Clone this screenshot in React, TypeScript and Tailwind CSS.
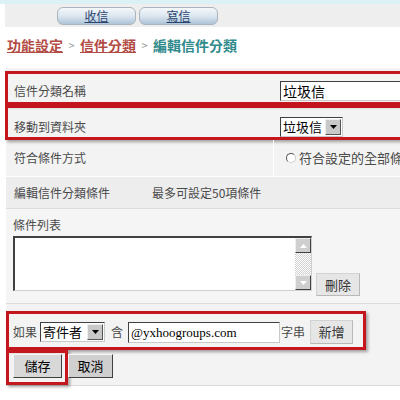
const cjk = '[font-family:"Noto_Sans_CJK_TC","Noto_Sans_CJK_SC",sans-serif]'

function Arrow({ up = false, color = '#000' }: { up?: boolean; color?: string }) {
  return (
    <svg width="7" height="4" viewBox="0 0 7 4">
      <path d={up ? 'M0 4 L3.5 0 L7 4 Z' : 'M0 0 L7 0 L3.5 4 Z'} fill={color} />
    </svg>
  )
}

function Select({ value, w }: { value: string; w: string }) {
  return (
    <div className={`flex items-stretch shrink-0 h-[20px] bg-white border border-t-[#404040] border-l-[#404040] border-r-[#c8c8c8] border-b-[#c8c8c8] ${w}`}>
      <span className="flex-1 min-w-0 whitespace-nowrap overflow-hidden pl-[2px] text-[13px] leading-[18px] text-black">{value}</span>
      <span className="w-[16px] shrink-0 m-[1px] flex items-center justify-center bg-[#c8c8c8] border border-t-[#eee] border-l-[#eee] border-r-[#555] border-b-[#555]">
        <Arrow />
      </span>
    </div>
  )
}

const redBox = 'border-[3px] border-[#c4161c] shadow-[2px_2px_3px_rgba(0,0,0,0.35)]'
const flatBtn = 'flex items-center justify-center shrink-0 bg-[#e6e6e6] border border-[#d2d2d2] border-r-[#b8b8b8] border-b-[#b8b8b8] text-[13px] text-[#333]'
const winBtn = 'flex items-center justify-center shrink-0 h-[24px] bg-[#cfcfcf] border border-t-[#f4f4f4] border-l-[#f4f4f4] border-r-[#404040] border-b-[#404040] text-[13px] text-black'

export default function App() {
  return (
    <div className={`w-[400px] h-[400px] overflow-hidden bg-white ${cjk}`}>
      <div className="h-[4px] bg-[#dcf1f6]" />
      <div className="ml-[5px] h-[23px] bg-[#eeeeee] flex items-start pt-[3px] pl-[52px] gap-[3px]">
        {['收信', '寫信'].map((t) => (
          <div key={t} className="w-[79px] h-[18px] rounded-[6px] border border-[#aab4bd] bg-gradient-to-b from-[#f4f7fa] via-[#dce7f0] to-[#aec4d8] flex items-center justify-center">
            <span className="text-[12px] leading-[14px] text-[#2c4570] underline">{t}</span>
          </div>
        ))}
      </div>

      <div className="h-[41px] pl-[7px] pt-[10px] flex items-start text-[14px] leading-[16px] font-bold">
        <span className="text-[#b24b44] underline">功能設定</span>
        <span className="w-[17px] text-center text-[11px] font-normal text-[#999]">&gt;</span>
        <span className="text-[#b24b44] underline">信件分類</span>
        <span className="w-[17px] text-center text-[11px] font-normal text-[#999]">&gt;</span>
        <span className="text-[#2f8a8c]">編輯信件分類</span>
      </div>

      <div className="ml-[6px] bg-[#f3f3f3] pt-[3px] border-b border-[#dcdcdc] text-[12px] text-[#4a4a4a]">
        <div className={`-ml-[1px] w-[420px] ${redBox}`}>
          <div className="h-[28px] pt-[6px] flex items-center">
            <span className="w-[272px] shrink-0 pl-[6px]">信件分類名稱</span>
            <div className="w-[130px] shrink-0 h-[20px] bg-white border border-t-[#404040] border-l-[#404040] border-r-[#c8c8c8] border-b-[#c8c8c8] pl-[2px] text-[14px] leading-[18px] text-black">垃圾信</div>
          </div>
        </div>
        <div className={`-ml-[1px] w-[420px] ${redBox}`}>
          <div className="h-[29px] pt-[8px] flex items-center">
            <span className="w-[272px] shrink-0 pl-[6px]">移動到資料夾</span>
            <Select value="垃圾信" w="w-[63px]" />
          </div>
        </div>

        <div className="h-[37px] flex border-b border-white">
          <div className="w-[267px] shrink-0 pl-[8px] flex items-center">符合條件方式</div>
          <div className="w-[1px] shrink-0 bg-white" />
          <div className="flex items-center pl-[12px] gap-[3px]">
            <span className="w-[10px] h-[10px] shrink-0 rounded-full bg-white border border-t-[#555] border-l-[#555] border-r-[#ccc] border-b-[#ccc]" />
            <span className="whitespace-nowrap text-[13px]">符合設定的全部條件</span>
          </div>
        </div>

        <div className="h-[32px] flex items-center bg-[#ededed] border-b border-[#dcdcdc]">
          <span className="w-[146px] shrink-0 pl-[8px]">編輯信件分類條件</span>
          <span>最多可設定50項條件</span>
        </div>

        <div className="h-[95px] pt-[9px] pl-[7px] border-b border-[#dcdcdc] bg-[#f5f5f5]">
          <div className="leading-[14px]">條件列表</div>
          <div className="mt-[4px] flex items-start">
            <div className="w-[299px] h-[55px] shrink-0 flex bg-white border-t-2 border-l-2 border-t-[#404040] border-l-[#404040] border-r border-b border-r-[#cfcfcf] border-b-[#cfcfcf]">
              <div className="flex-1" />
              <div className="w-[16px] flex flex-col">
                <span className="h-[15px] flex items-center justify-center bg-[#cfcfcf] border border-t-[#eee] border-l-[#eee] border-r-[#404040] border-b-[#404040]">
                  <Arrow up color="#fff" />
                </span>
                <span className="flex-1 bg-[repeating-conic-gradient(#d0d0d0_0_25%,#ffffff_0_50%)] bg-[length:2px_2px]" />
                <span className="h-[15px] flex items-center justify-center bg-[#cfcfcf] border border-t-[#eee] border-l-[#eee] border-r-[#404040] border-b-[#404040]">
                  <Arrow color="#fff" />
                </span>
              </div>
            </div>
            <button className={`ml-[4px] mt-[37px] w-[44px] h-[23px] ${flatBtn}`}>刪除</button>
          </div>
        </div>

        <div className="pt-[7px]">
          <div className={`w-[360px] ${redBox}`}>
            <div className="h-[33px] pt-[3px] pl-[4px] flex items-center">
              <span className="w-[24px] shrink-0">如果</span>
              <div className="ml-[3px]"><Select value="寄件者" w="w-[65px]" /></div>
              <span className="ml-[6px]">含</span>
              <div className="ml-[5px] w-[152px] shrink-0 h-[21px] bg-white border border-t-[#404040] border-l-[#404040] border-r-[#c8c8c8] border-b-[#c8c8c8] pl-[2px] text-[13px] leading-[19px] text-black [font-family:'Liberation_Serif',serif]">@yxhoogroups.com</div>
              <span className="ml-[1px]">字串</span>
              <button className={`ml-[5px] w-[43px] h-[24px] ${flatBtn}`}>新增</button>
            </div>
          </div>
          <div className="flex items-start">
            <div className={`w-[62px] ${redBox}`}>
              <div className="h-[29px] pt-[1px] pl-[4px]">
                <button className={`w-[49px] ${winBtn} bg-[#d8d8d8]`}>儲存</button>
              </div>
            </div>
            <button className={`mt-[4px] w-[45px] ${winBtn}`}>取消</button>
          </div>
        </div>
      </div>
    </div>
  )
}
